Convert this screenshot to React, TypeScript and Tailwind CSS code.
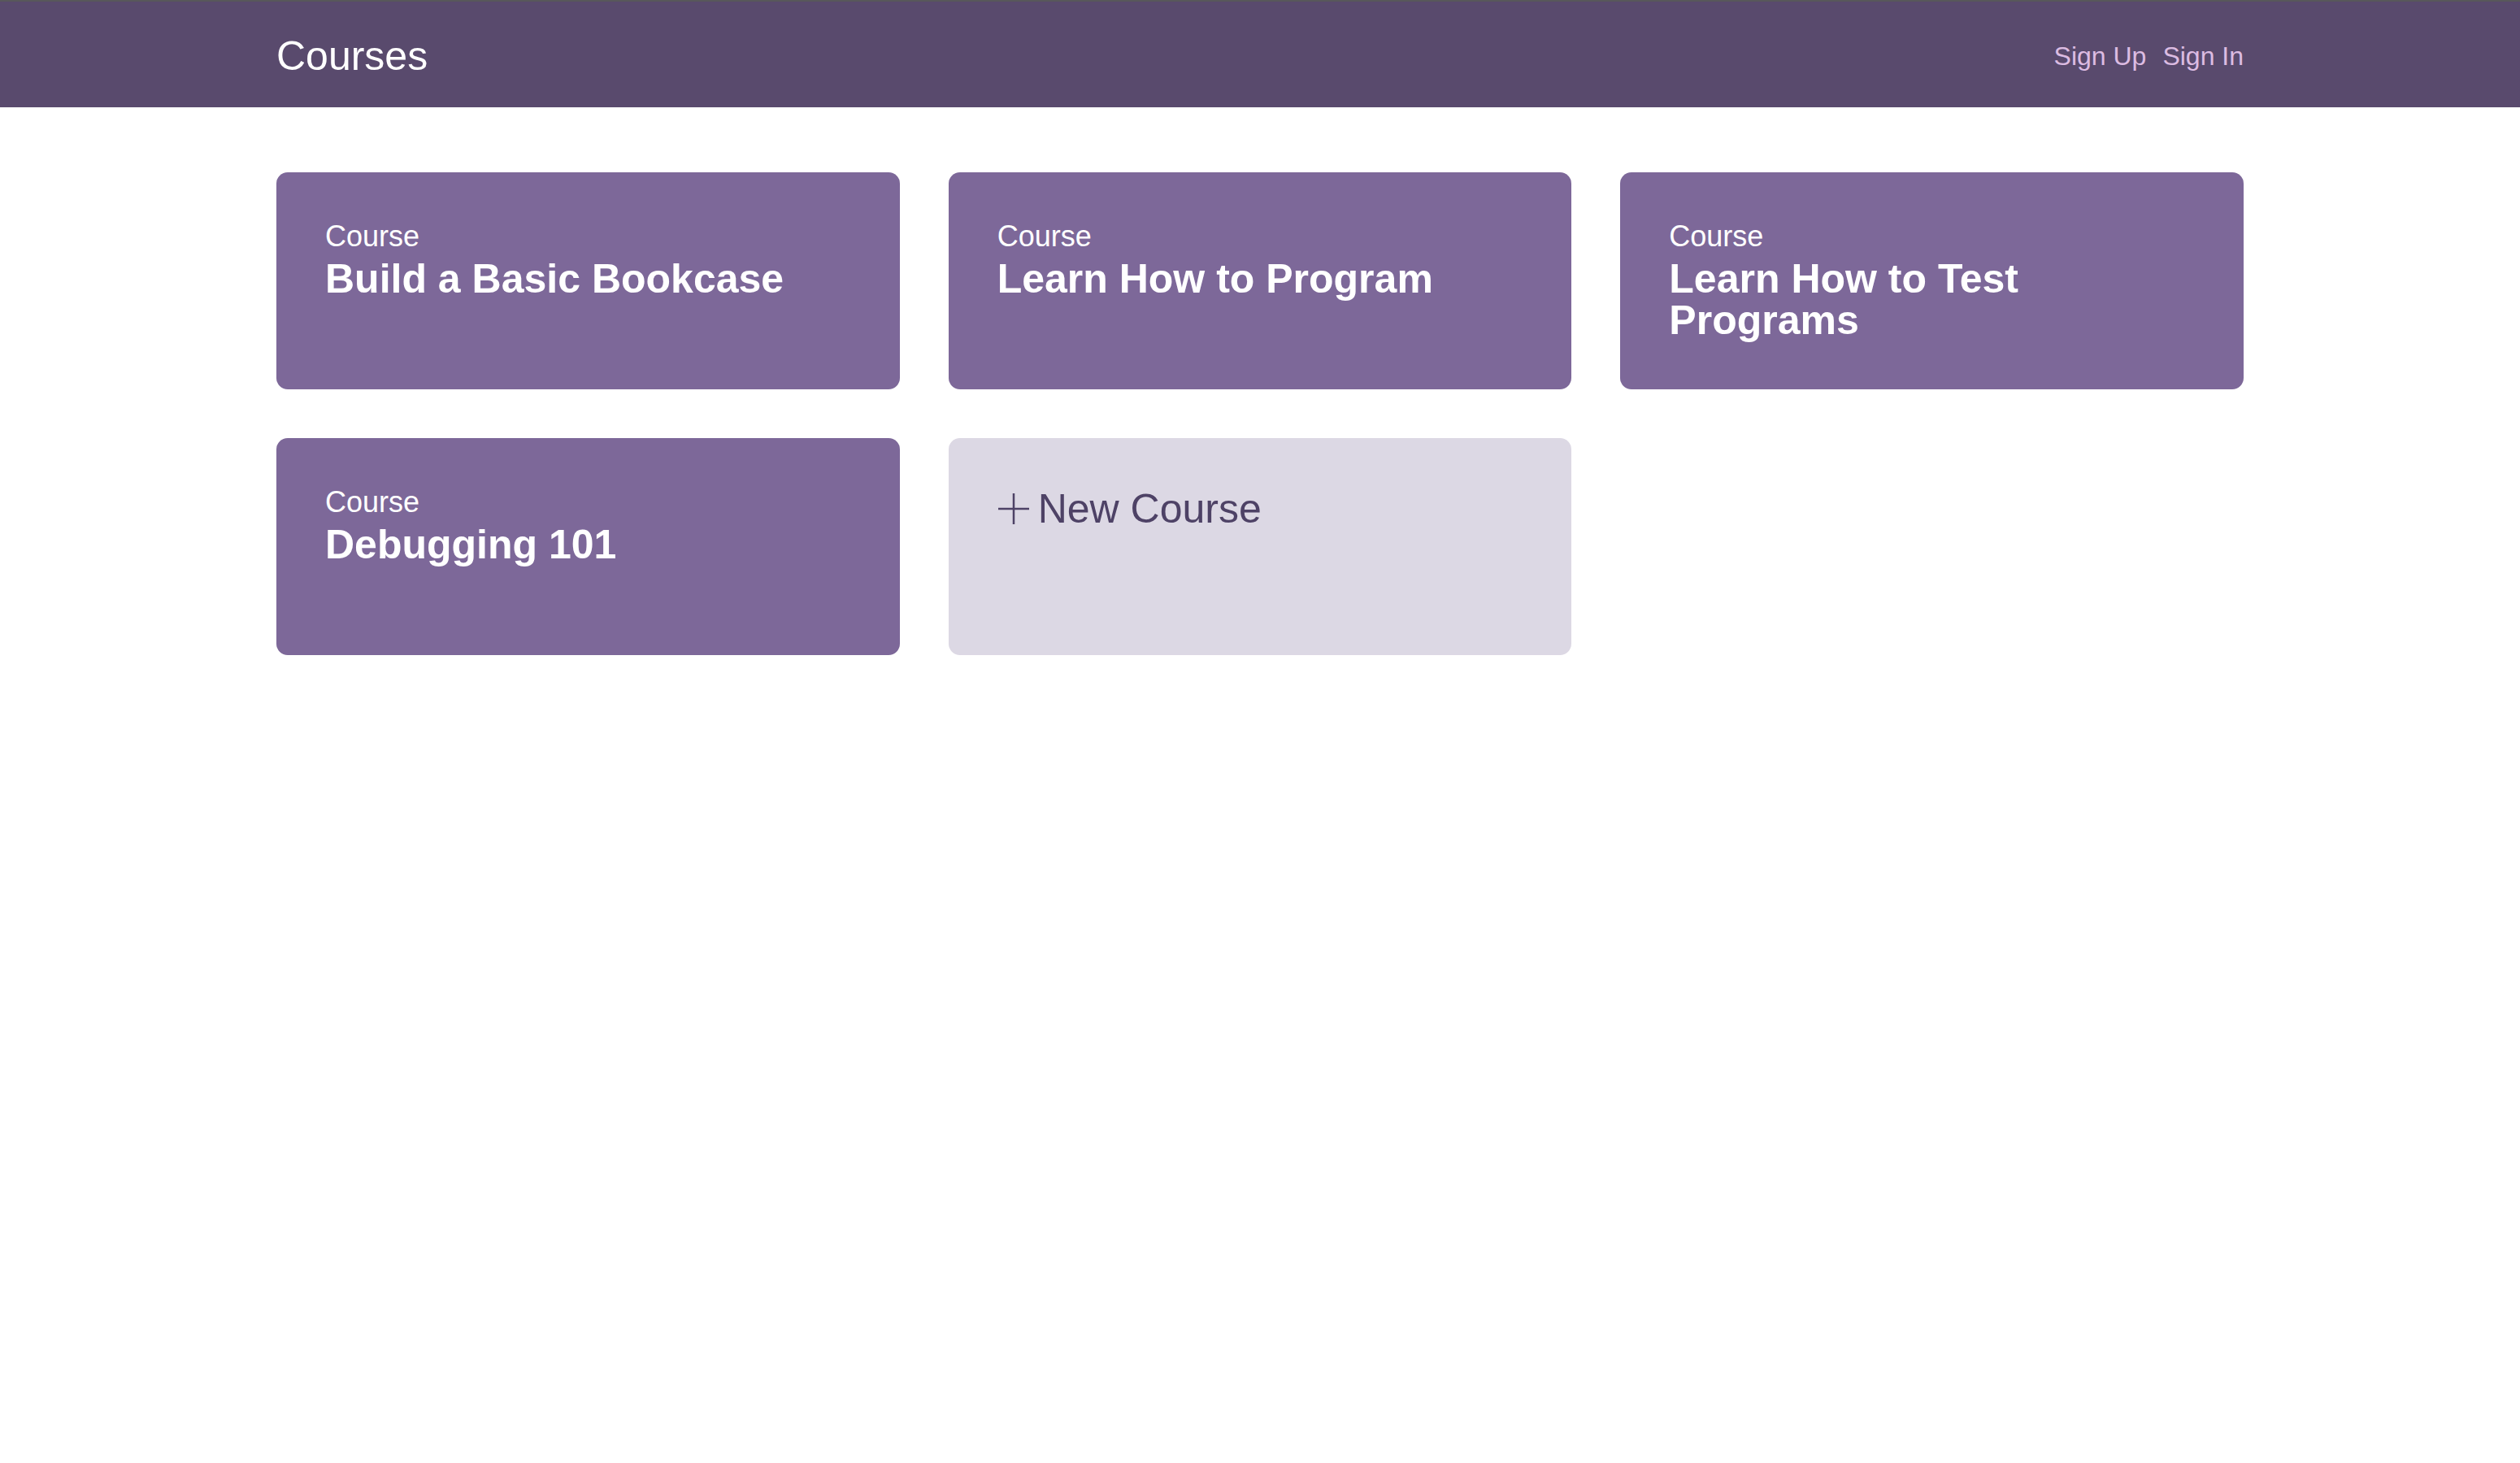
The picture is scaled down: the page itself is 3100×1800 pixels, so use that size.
import React from 'react';

const courses = [
  'Build a Basic Bookcase',
  'Learn How to Program',
  'Learn How to Test Programs',
  'Debugging 101',
];

const PlusIcon: React.FC = () => (
  <svg width="40" height="40" viewBox="0 0 40 40" className="shrink-0">
    <line x1="20" y1="1" x2="20" y2="39" stroke="#4e4266" strokeWidth="2.5" />
    <line x1="1" y1="20" x2="39" y2="20" stroke="#4e4266" strokeWidth="2.5" />
  </svg>
);

const CourseCard: React.FC<{ title: string }> = ({ title }) => (
  <div className="h-[267px] rounded-[14px] bg-[#7d6899] px-[60px] pt-[57px] text-white">
    <div className="text-[36px] leading-[43px]">Course</div>
    <h3 className="mt-[6px] text-[50px] font-bold leading-[51px]">{title}</h3>
  </div>
);

const App: React.FC = () => {
  return (
    <div className="min-h-screen bg-white font-['Liberation_Sans',Arial,sans-serif]">
      <header className="border-t-2 border-[#58575b] bg-[#594a6d]">
        <div className="mx-auto flex h-[130px] w-[2420px] items-center justify-between pt-[4px]">
          <h1 className="text-[50px] leading-none text-white">Courses</h1>
          <nav className="flex gap-[20px] text-[32px] text-[#dcbce2]">
            <a href="#">Sign Up</a>
            <a href="#">Sign In</a>
          </nav>
        </div>
      </header>

      <main className="mx-auto grid w-[2420px] grid-cols-3 gap-[60px] pt-[80px]">
        {courses.map((c) => (
          <CourseCard key={c} title={c} />
        ))}
        <a href="#" className="h-[267px] rounded-[14px] bg-[#dcd8e4] px-[60px] pt-[57px] text-[#4e4266]">
          <div className="flex items-center gap-[10px] text-[50px] font-light leading-[60px]">
            <PlusIcon />
            <span>New Course</span>
          </div>
        </a>
      </main>
    </div>
  );
};

export default App;
